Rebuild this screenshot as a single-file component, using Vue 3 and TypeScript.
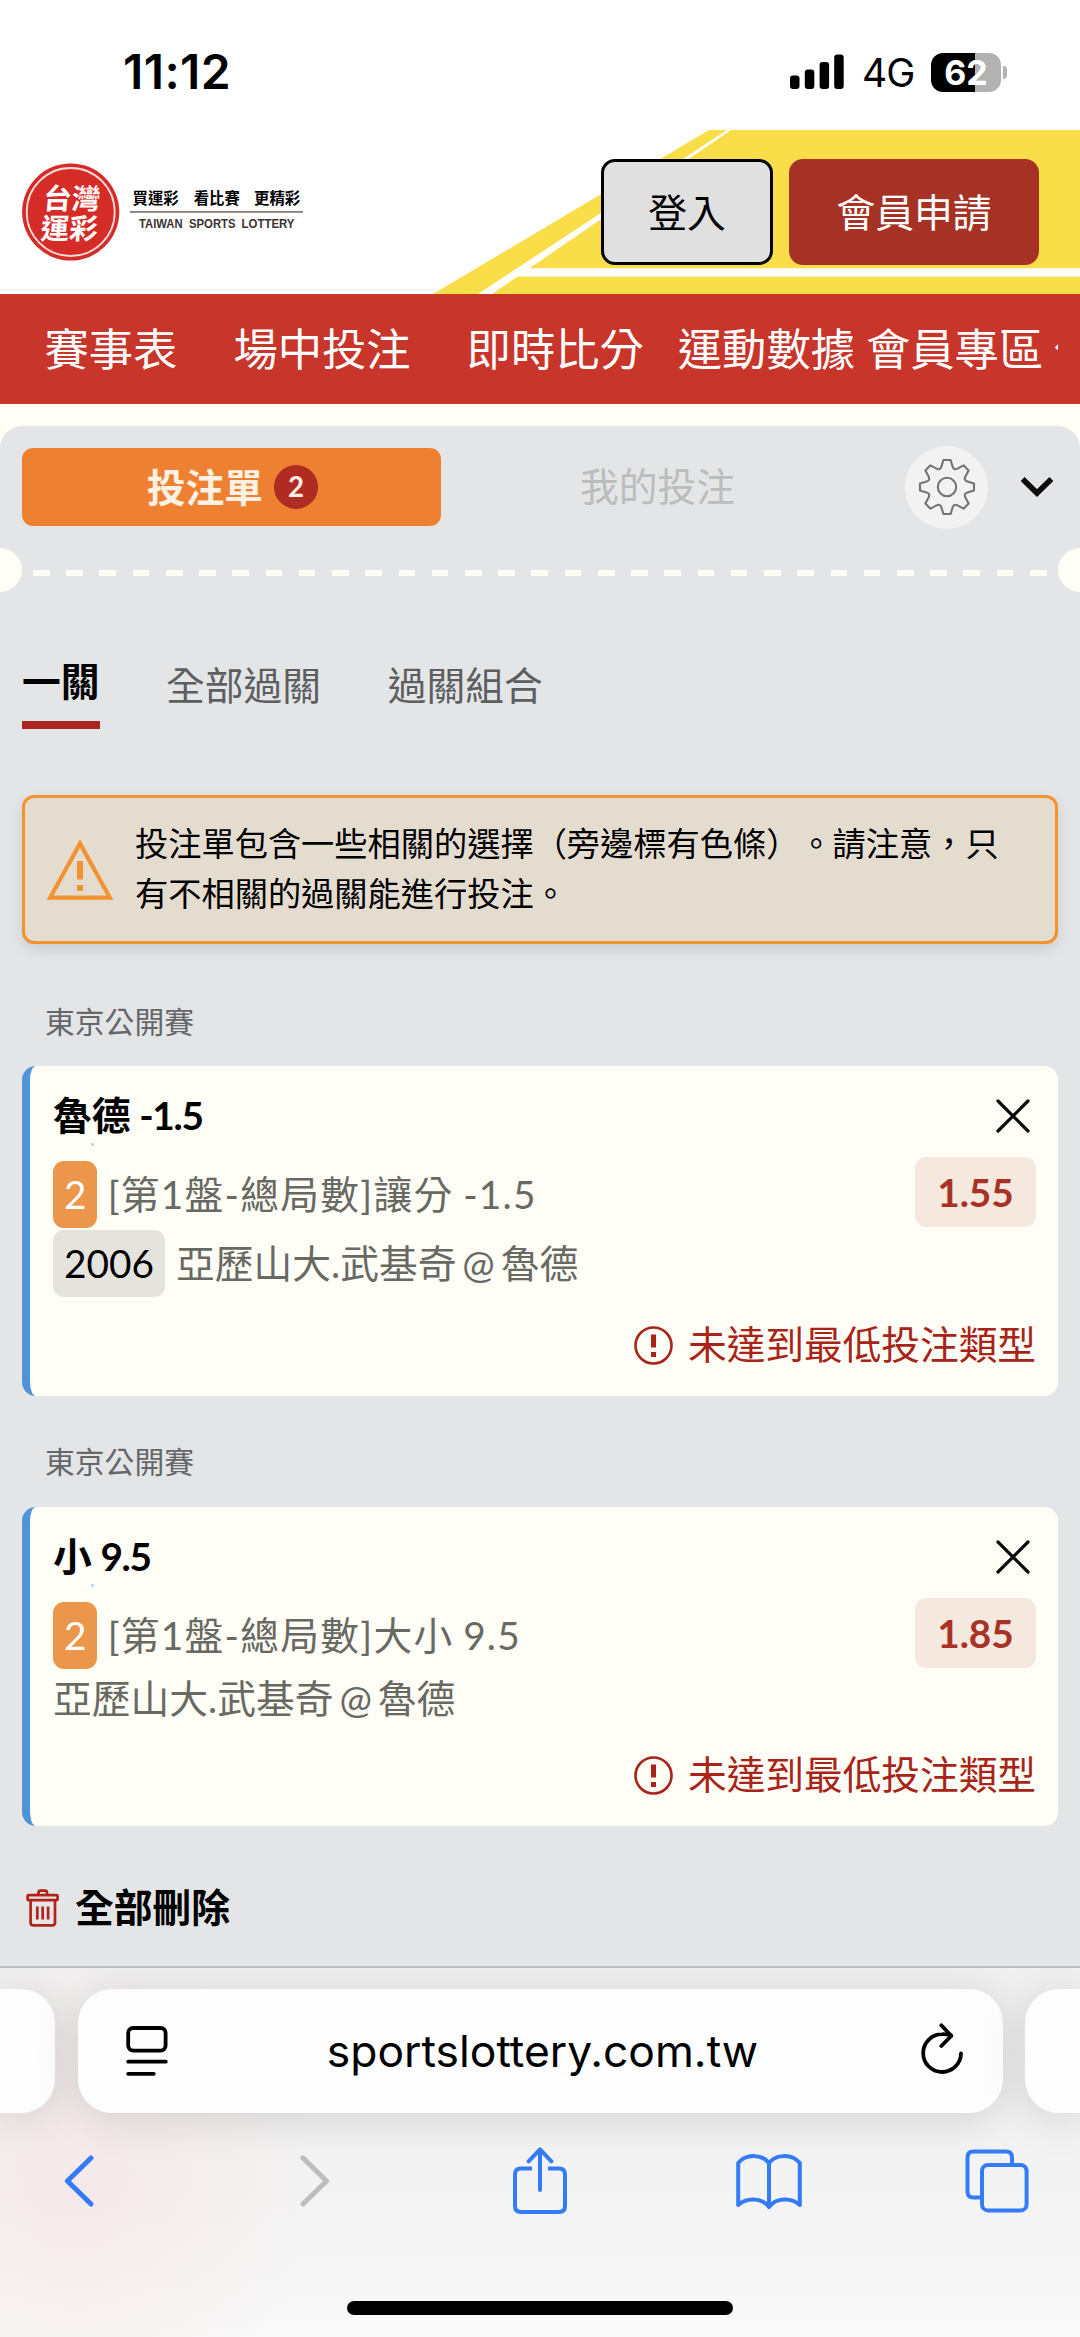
<script setup lang="ts">
interface NavItem {
  label: string
  gap: number
}

interface Bet {
  id: number
  league: string
  pick: string
  line: string
  legs: string
  market: string
  code?: string
  match: string
  odds: string
}

const navItems: NavItem[] = [
  { label: '賽事表', gap: 0 },
  { label: '場中投注', gap: 56 },
  { label: '即時比分', gap: 56 },
  { label: '運動數據', gap: 34 },
  { label: '會員專區', gap: 11 },
  { label: '公告', gap: 10 },
]

const bets: Bet[] = [
  {
    id: 1,
    league: '東京公開賽',
    pick: '魯德',
    line: '-1.5',
    legs: '2',
    market: '[第1盤-總局數]讓分 -1.5',
    code: '2006',
    match: '亞歷山大.武基奇 @ 魯德',
    odds: '1.55',
  },
  {
    id: 2,
    league: '東京公開賽',
    pick: '小',
    line: '9.5',
    legs: '2',
    market: '[第1盤-總局數]大小 9.5',
    match: '亞歷山大.武基奇 @ 魯德',
    odds: '1.85',
  },
]

// Outline of an eight-toothed gear centred on the origin
function gearPath(): string {
  const at = (x: number, y: number, a: number): string => {
    const c = Math.cos(a)
    const s = Math.sin(a)
    return `${(x * c - y * s).toFixed(2)} ${(x * s + y * c).toFixed(2)}`
  }
  let d = ''
  for (let i = 0; i < 8; i++) {
    const a = (i * Math.PI) / 4
    const next = a + Math.PI / 4
    d += `${i ? 'L' : 'M'}${at(-5.6, -20.4, a)}L${at(-3.6, -27, a)}L${at(3.6, -27, a)}L${at(5.6, -20.4, a)}`
    d += `Q${at(0, -17.8, a + Math.PI / 8)} ${at(-5.6, -20.4, next)}`
  }
  return d + 'Z'
}
const gear = gearPath()
</script>

<template>
  <div class="phone" lang="zh-TW">
    <div class="status">
      <span class="clock">11:12</span>
      <div class="status-right">
        <svg class="signal" width="54" height="36" viewBox="0 0 54 36">
          <rect x="0" y="21.5" width="9.5" height="13.5" rx="3" />
          <rect x="14.8" y="15.5" width="9.5" height="19.5" rx="3" />
          <rect x="29.6" y="8" width="9.5" height="27" rx="3" />
          <rect x="44.2" y="0.5" width="9.5" height="34.5" rx="3" />
        </svg>
        <span class="net">4G</span>
        <div class="battery"><span>62</span></div>
        <i class="battery-tip"></i>
      </div>
    </div>

    <header class="brand-bar">
      <svg class="stripes" width="1080" height="164" viewBox="0 0 1080 164">
        <path d="M433 164L709 0H1080V164Z" fill="#f9de4a" />
        <path d="M478 164L727 0H731L492 164Z" fill="#fff" />
        <path d="M512 146.5L525 138.3H1080V146.5Z" fill="#fff" />
      </svg>
      <svg class="logo" width="290" height="100" viewBox="0 0 290 100">
        <circle cx="48.7" cy="50" r="48.6" fill="#d52c27" />
        <circle cx="48.7" cy="50" r="44" fill="none" stroke="#fbdedb" stroke-width="1.8" />
        <g class="seal" fill="#fff" transform="translate(48.7 50) skewX(-5)">
          <text x="-28.5" y="-3" textLength="57">台灣</text>
          <text x="-28.5" y="26.5" textLength="57">運彩</text>
        </g>
        <g class="slogan">
          <text x="110.5" y="42">買運彩</text>
          <text x="171.7" y="42">看比賽</text>
          <text x="232" y="42">更精彩</text>
        </g>
        <rect x="108" y="49" width="173" height="1.8" fill="#857b7b" />
        <g class="latin">
          <text x="117" y="65.7" textLength="43.5" lengthAdjust="spacingAndGlyphs">TAIWAN</text>
          <text x="167" y="65.7" textLength="46.5" lengthAdjust="spacingAndGlyphs">SPORTS</text>
          <text x="219.5" y="65.7" textLength="53" lengthAdjust="spacingAndGlyphs">LOTTERY</text>
        </g>
      </svg>
      <button class="btn login">登入</button>
      <button class="btn join">會員申請</button>
    </header>

    <nav class="nav">
      <div class="nav-clip">
        <a v-for="n in navItems" :key="n.label" :style="{ marginLeft: n.gap + 'px' }">{{ n.label }}</a>
      </div>
    </nav>

    <main class="page">
      <section class="slip">
        <div class="slip-head">
          <div class="slip-tab active">
            <span>投注單</span><b class="count">2</b>
          </div>
          <div class="slip-tab">我的投注</div>
          <div class="gear">
            <svg width="62" height="62" viewBox="-31 -31 62 62" fill="none" stroke="#747474" stroke-width="2.1" stroke-linejoin="round">
              <path :d="gear" />
              <circle r="9.2" />
            </svg>
          </div>
          <svg class="chevron" width="34" height="22" viewBox="0 0 34 22">
            <path d="M2.6 3L17 17L31.4 3" fill="none" stroke="#0c0c0c" stroke-width="5.6" />
          </svg>
        </div>

        <div class="tear">
          <i class="notch"></i>
          <div class="dashes"></div>
          <i class="notch"></i>
        </div>

        <div class="modes">
          <span class="mode on">一關</span>
          <span class="mode">全部過關</span>
          <span class="mode">過關組合</span>
        </div>

        <div class="alert">
          <svg width="68" height="62" viewBox="0 0 68 62">
            <path d="M34 4.5L63.8 58.6H4.2Z" fill="none" stroke="#f29230" stroke-width="4.2" />
            <rect x="31" y="22" width="6" height="18.5" fill="#f29230" />
            <rect x="31" y="46" width="6" height="6" fill="#f29230" />
          </svg>
          <p>投注單包含一些相關的選擇（旁邊標有色條）。請注意，只有不相關的過關能進行投注。</p>
        </div>

        <template v-for="b in bets" :key="b.id">
          <div class="league">{{ b.league }}</div>
          <article class="card">
            <div class="title-row">
              <h3>{{ b.pick }} <span>{{ b.line }}</span></h3>
              <svg width="34" height="34" viewBox="0 0 34 34">
                <path d="M2 2L32 32M32 2L2 32" stroke="#0c0c0c" stroke-width="3.2" stroke-linecap="round" />
              </svg>
            </div>
            <i class="speck"></i>
            <div class="body-row">
              <div class="lines">
                <div class="line market">
                  <span class="chip legs">{{ b.legs }}</span>{{ b.market }}
                </div>
                <div class="line match" :class="{ plain: !b.code }">
                  <span v-if="b.code" class="chip code">{{ b.code }}</span>{{ b.match }}
                </div>
              </div>
              <div class="odds">{{ b.odds }}</div>
            </div>
            <div class="warn">
              <svg width="39" height="39" viewBox="0 0 39 39">
                <circle cx="19.5" cy="19.5" r="18" fill="none" stroke="#a82419" stroke-width="2.6" />
                <rect x="17" y="8.5" width="5" height="13" fill="#a82419" />
                <rect x="17" y="26" width="5" height="5" fill="#a82419" />
              </svg>
              <span>未達到最低投注類型</span>
            </div>
          </article>
        </template>

        <div class="clear">
          <svg width="34" height="38" viewBox="0 0 34 38" fill="none" stroke="#b02318" stroke-width="2.7" stroke-linejoin="round">
            <path d="M12.5 6V3.6Q12.5 1.6 14.5 1.6H19Q21 1.6 21 3.6V6" />
            <rect x="1.6" y="6.2" width="30" height="5" rx="1" />
            <path d="M4.6 11.4V33.4Q4.6 36.4 7.6 36.4H26Q29 36.4 29 33.4V11.4" />
            <path d="M11.3 17.5V30.5M16.7 17.5V30.5M22.1 17.5V30.5" />
          </svg>
          <span>全部刪除</span>
        </div>
      </section>
    </main>

    <footer class="browser">
      <div class="address-row">
        <div class="side left"></div>
        <div class="address">
          <svg width="42" height="52" viewBox="0 0 42 52" fill="none" stroke="#000" stroke-width="3.8" stroke-linecap="round">
            <rect x="2.2" y="3" width="37.4" height="22.6" rx="5" />
            <path d="M2.2 36.7H39.8M2.2 48.8H27.8" />
          </svg>
          <span>sportslottery.com.tw</span>
          <svg class="reload" width="44" height="54" viewBox="0 0 44 54" fill="none" stroke="#000" stroke-width="3.8" stroke-linecap="round" stroke-linejoin="round">
            <path d="M40 32.5A18.9 18.9 0 1 1 21.2 13.2Q26 12.9 30 14.6" />
            <path d="M20.3 4.3L30.3 14.8L20.3 25" />
          </svg>
        </div>
        <div class="side right"></div>
      </div>
      <div class="tools">
        <svg class="back" width="30" height="52" viewBox="0 0 30 52"><path d="M27 3L3.4 26L27 49" /></svg>
        <svg class="off forward" width="30" height="52" viewBox="0 0 30 52"><path d="M3 3L26.6 26L3 49" /></svg>
        <svg class="thin share" width="54" height="68" viewBox="0 0 54 68">
          <path class="butt" d="M19 21.6H8Q2 21.6 2 27.6V59Q2 65 8 65H46Q52 65 52 59V27.6Q52 21.6 46 21.6H35" />
          <path d="M27 43V3.5M15.6 14.3L27 2.4L38.4 14.3" />
        </svg>
        <svg class="thin book" width="66" height="58" viewBox="0 0 66 58">
          <path d="M33 55V11.5C28 3 11 0.5 2.2 11V53C10 45.5 26 45 33 55C40 45 56 45.5 63.8 53V11C55 0.5 38 3 33 11.5" />
        </svg>
        <svg class="thin tabs" width="64" height="64" viewBox="0 0 64 64">
          <path d="M15 48.5H8.5Q2.5 48.5 2.5 42.5V8.5Q2.5 2.5 8.5 2.5H41Q47 2.5 47 8.5V15" />
          <rect x="17" y="16" width="44.6" height="45.4" rx="6" />
        </svg>
      </div>
      <div class="home"></div>
    </footer>
  </div>
</template>

<style>
body {
  margin: 0;
}
</style>

<style scoped>
* {
  box-sizing: border-box;
}
.phone {
  width: 1080px;
  height: 2337px;
  overflow: hidden;
  display: flex;
  flex-direction: column;
  background: #fff;
  font-family: Lato, 'Noto Sans CJK TC', sans-serif;
  font-size: 38.77px;
  color: #000;
}
svg {
  display: block;
  flex: none;
}

/* status bar */
.status {
  height: 130px;
  flex: none;
  display: flex;
  justify-content: space-between;
  padding: 43px 73px 0 123px;
  font-family: Inter, sans-serif;
}
.clock {
  font-size: 48px;
  font-weight: 600;
  line-height: 57px;
  letter-spacing: 0.4px;
}
.status-right {
  display: flex;
  align-items: center;
  height: 58px;
}
.net {
  margin: 1px 0 0 18px;
  font-size: 39px;
  line-height: 46px;
  width: 51px;
  letter-spacing: -1px;
}
.battery {
  width: 70px;
  height: 39px;
  margin-left: 18px;
  border-radius: 12px;
  background: linear-gradient(90deg, #000 0 44px, #b2b2b2 44px);
  color: #fff;
  font-size: 34px;
  font-weight: 700;
  line-height: 39px;
  text-align: center;
}
.battery-tip {
  width: 4px;
  height: 13px;
  margin: 0 0 0 2px;
  border-radius: 0 4px 4px 0;
  background: #b2b2b2;
}

/* brand bar */
.brand-bar {
  position: relative;
  height: 164px;
  flex: none;
  display: flex;
  align-items: flex-start;
  padding: 29px 41px 0 22px;
}
.stripes {
  position: absolute;
  inset: 0;
}
.logo {
  position: relative;
  margin-top: 3px;
}
.seal {
  font: 700 28.5px 'Noto Sans CJK TC', sans-serif;
}
.slogan {
  font: 700 15.4px 'Noto Sans CJK TC', sans-serif;
}
.latin {
  font: 700 12.4px 'Liberation Sans', sans-serif;
  fill: #3a3232;
}
.btn {
  position: relative;
  height: 106px;
  padding: 0;
  border: 3px solid #000;
  border-radius: 14px;
  font: inherit;
  line-height: 99px;
}
.login {
  margin-left: auto;
  width: 172px;
  background: #e0e0e0;
  color: #000;
}
.join {
  margin-left: 16px;
  width: 250px;
  background: #a63225;
  border-color: #a63225;
  color: #fff;
}

/* nav */
.nav {
  height: 110px;
  flex: none;
  background: #c8352b;
  padding: 0 22px 0 44.5px;
}
.nav-clip {
  display: flex;
  overflow: hidden;
}
.nav a {
  flex: none;
  font-size: 44.3px;
  line-height: 109px;
  color: #fff;
}

/* slip */
.page {
  flex: none;
  height: 1562px;
  padding-top: 22px;
  background: #fffef6;
}
.slip {
  height: 1540px;
  border-radius: 22px 22px 0 0;
  background: #e4e5e7;
}
.slip-head {
  display: flex;
  align-items: center;
  height: 122px;
  padding: 0 26px 0 22px;
}
.slip-tab {
  width: 419px;
  height: 78px;
  line-height: 76px;
  text-align: center;
  color: #bbbcbc;
}
.slip-tab + .slip-tab {
  width: 433px;
}
.slip-tab.active {
  display: flex;
  align-items: center;
  justify-content: center;
  padding-left: 2px;
  border-radius: 11px;
  background: #ee8131;
  color: #fff1e4;
  font-weight: 700;
}
.count {
  width: 44.3px;
  height: 44.3px;
  margin-left: 11px;
  border-radius: 50%;
  background: #b02b21;
  font-size: 27.7px;
  font-weight: 700;
  line-height: 44px;
}
.gear {
  width: 83px;
  height: 83px;
  margin-left: 31px;
  border-radius: 50%;
  background: #f2f2f2;
  display: flex;
  align-items: center;
  justify-content: center;
}
.chevron {
  margin-left: auto;
}
.tear {
  display: flex;
  align-items: center;
  height: 44px;
}
.notch {
  width: 22px;
  height: 44px;
  background: #fffef6;
  border-radius: 0 22px 22px 0;
}
.notch:last-child {
  border-radius: 22px 0 0 22px;
}
.dashes {
  flex: 1;
  height: 6px;
  margin: 5px 11px 0;
  background: repeating-linear-gradient(90deg, #fffef6 0 16.6px, transparent 16.6px 33.23px);
}
.modes {
  display: flex;
  align-items: flex-start;
  gap: 66.5px;
  padding: 65px 22px 0;
  height: 203px;
  line-height: 56px;
  color: #5c5e5f;
}
.mode.on {
  height: 71.5px;
  border-bottom: 8.5px solid #ab2620;
  color: #000;
  font-weight: 700;
  line-height: 48px;
}
.alert {
  display: flex;
  align-items: center;
  height: 149px;
  margin: 0 22px;
  padding: 0 20px 0 21px;
  border: 3px solid #f29230;
  border-radius: 12px;
  background: #e5dcd0;
  box-shadow: 0 6px 14px rgba(0, 0, 0, 0.1);
}
.alert p {
  margin: 0 0 4px 21px;
  width: 880px;
  font-size: 33.23px;
  line-height: 50px;
  text-spacing-trim: space-all;
}
.league {
  margin: 0 45px;
  padding-top: 44px;
  height: 122px;
  font-size: 29.8px;
  line-height: 67px;
  color: #65676a;
}
.card {
  position: relative;
  margin: 0 22px;
  height: 330px;
  padding: 22px 22px 0 23px;
  border-left: 8.5px solid #5094d8;
  border-radius: 14px;
  background: #fffef6;
}
.card + .league {
  padding-top: 32px;
  height: 111px;
}
.card:nth-of-type(2) {
  height: 319px;
}
.title-row {
  display: flex;
  justify-content: space-between;
  align-items: center;
  height: 56px;
  padding-right: 6px;
}
h3 {
  margin: 0;
  font-size: inherit;
  font-weight: 700;
  line-height: 54px;
  height: 56px;
  word-spacing: -0.8px;
}
h3 span {
  letter-spacing: -1.3px;
}
.speck {
  position: absolute;
  left: 61px;
  top: 77px;
  width: 3px;
  height: 3px;
  background: #c4dbee;
}
.body-row {
  display: flex;
  justify-content: space-between;
  align-items: flex-start;
  padding-top: 13px;
}
.lines {
  padding-top: 4px;
  color: #696964;
}
.line {
  display: flex;
  line-height: 66px;
  height: 67px;
  white-space: pre;
}
.market {
  letter-spacing: 1.25px;
  word-spacing: -1.5px;
}
.match {
  margin-top: 2px;
  word-spacing: -4px;
}
.match.plain {
  margin-top: -4px;
}
.chip {
  height: 67px;
  padding: 0 11px;
  margin-right: 11px;
  border-radius: 11px;
  line-height: 67px;
}
.legs {
  padding-right: 9px;
  background: #ec964c;
  color: #fff;
}
.code {
  background: #e5e3dd;
  color: #000;
}
.odds {
  width: 121px;
  height: 70px;
  border-radius: 11px;
  background: #f5e8df;
  color: #a93226;
  font-weight: 700;
  line-height: 71px;
  text-align: center;
}
.warn {
  position: absolute;
  right: 22px;
  bottom: 22px;
  display: flex;
  align-items: center;
  gap: 15px;
  height: 58px;
  color: #a82419;
}
.warn span {
  line-height: 56px;
  height: 58px;
  letter-spacing: -0.1px;
}
.clear {
  display: flex;
  align-items: center;
  gap: 15px;
  height: 56px;
  margin: 54px 0 0 26px;
  font-weight: 700;
}
.clear span {
  line-height: 54px;
  height: 56px;
}

/* browser chrome */
.browser {
  flex: none;
  height: 371px;
  border-top: 2px solid #bdbebf;
  background: radial-gradient(circle at 75px 215px, rgba(247, 228, 228, 0.7), rgba(247, 240, 232, 0) 240px),
    linear-gradient(#f0f0f0, #f3f3f3 60%, #f9f9f9);
  overflow: hidden;
}
.address-row {
  display: flex;
  justify-content: space-between;
  padding-top: 21px;
}
.side,
.address {
  height: 124px;
  background: #fdfdfd;
  box-shadow: 0 6px 44px rgba(0, 0, 0, 0.13);
}
.side {
  width: 55px;
}
.left {
  border-radius: 0 34px 34px 0;
}
.right {
  border-radius: 34px 0 0 34px;
}
.address {
  display: flex;
  align-items: center;
  justify-content: space-between;
  width: 925px;
  padding: 0 38px 0 48px;
  border-radius: 34px;
  font-family: Inter, sans-serif;
  font-size: 44.4px;
}
.address span {
  margin-right: 3px;
}
.reload {
  margin-top: -7px;
}
.tools {
  display: flex;
  align-items: center;
  height: 68px;
  margin: 34px 0 0 64px;
}
.forward {
  margin-left: 206px;
}
.share {
  margin-left: 183px;
}
.book {
  margin-left: 168.5px;
}
.tabs {
  margin-left: 163px;
}
.tools path,
.tools rect {
  fill: none;
  stroke: #347cf7;
  stroke-width: 5;
  stroke-linecap: round;
  stroke-linejoin: round;
}
.tools .thin path,
.tools .thin rect {
  stroke-width: 4;
}
.tools .butt {
  stroke-linecap: butt;
}
.tools .off path {
  stroke: #bdbdbd;
}
.home {
  width: 386px;
  height: 14px;
  margin: 86px auto 0;
  border-radius: 7px;
  background: #000;
}
</style>
